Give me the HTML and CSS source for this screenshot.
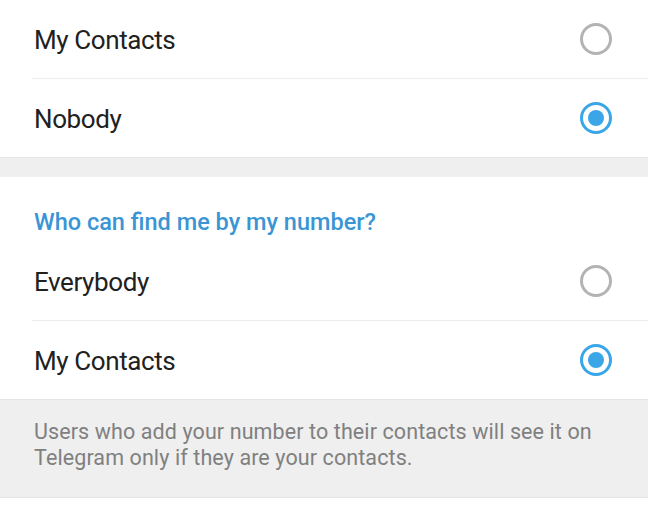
FILE: index.html
```html
<!DOCTYPE html>
<html lang="en">
<head>
    <meta charset="UTF-8">
    <meta name="viewport" content="width=device-width, initial-scale=1.0">
    <title>Privacy - Phone Number</title>
    <link rel="stylesheet" href="styles.css">
</head>
<body>

    <div class="section">
        <div class="option">
            <span class="label">My Contacts</span>
            <span class="radio"></span>
        </div>
        <div class="option">
            <span class="label">Nobody</span>
            <span class="radio checked"></span>
        </div>
    </div>

    <div class="spacer"></div>

    <div class="section">
        <div class="section-title">Who can find me by my number?</div>
        <div class="option">
            <span class="label">Everybody</span>
            <span class="radio"></span>
        </div>
        <div class="option">
            <span class="label">My Contacts</span>
            <span class="radio checked"></span>
        </div>
    </div>

    <div class="info">
        Users who add your number to their contacts will see it on Telegram only if they are your contacts.
    </div>

</body>
</html>
```

FILE: styles.css
```css
/* General */
body {
    margin: 0;
    background: #ffffff;
    font-family: Roboto, "Noto Sans", sans-serif;
    color: #212121;
}

/* Sections */
.section {
    background: #ffffff;
    border-bottom: 1px solid #e4e4e4;
}

.spacer {
    height: 19px;
    background: #efefef;
}

.section-title {
    padding: 30px 34px 0;
    height: 35px;
    font-size: 23.5px;
    font-weight: 500;
    color: #3a95d5;
    line-height: 30px;
    letter-spacing: 0;
}

/* Rows */
.option {
    height: 78px;
    margin-left: 32px;
    padding-right: 36px;
    padding-left: 2px;
    display: flex;
    align-items: center;
    justify-content: space-between;
    border-bottom: 1px solid #ececec;
}

.option:last-child {
    border-bottom: none;
}

.label {
    font-size: 26px;
    letter-spacing: -0.4px;
    padding-top: 2px;
}

/* Radio buttons */
.radio {
    width: 26px;
    height: 26px;
    border: 3px solid #b3b3b3;
    border-radius: 50%;
    position: relative;
}

.radio.checked {
    border-color: #3aa6e8;
}

.radio.checked::after {
    content: "";
    position: absolute;
    top: 5px;
    left: 5px;
    width: 16px;
    height: 16px;
    border-radius: 50%;
    background: #3aa6e8;
}

/* Footer note */
.info {
    background: #efefef;
    color: #808080;
    font-size: 21.5px;
    line-height: 26px;
    letter-spacing: 0.1px;
    padding: 19px 34px 26px;
    border-bottom: 1px solid #e4e4e4;
}
```
